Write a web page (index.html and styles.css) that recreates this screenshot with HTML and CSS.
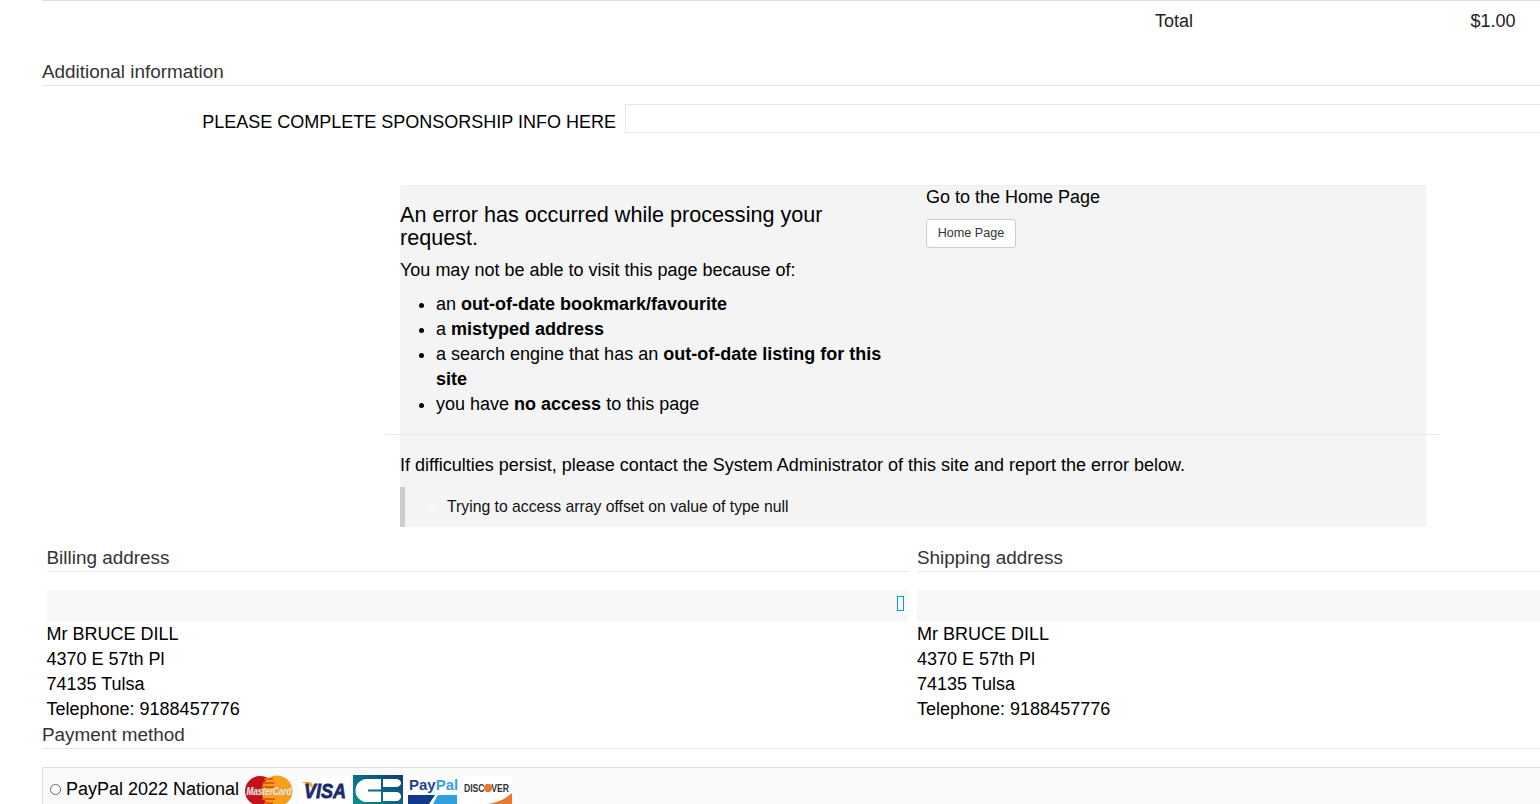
FILE: index.html
```html
<!DOCTYPE html>
<html lang="en">
<head>
<meta charset="utf-8">
<title>Checkout</title>
<link rel="stylesheet" href="styles.css">
</head>
<body>
<div class="page">
  <div class="total-row"><span class="total-label">Total</span><span class="total-value">$1.00</span></div>
  <h3 class="section additional">Additional information</h3>
  <div class="field-row">
    <label class="field-label">PLEASE COMPLETE SPONSORSHIP INFO HERE</label>
    <div class="field-input"></div>
  </div>
  <div class="error-wrap">
    <div class="error-box">
      <div class="error-cols">
        <div class="error-left">
          <h2 class="error-title">An error has occurred while processing your request.</h2>
          <p class="error-intro">You may not be able to visit this page because of:</p>
          <ul class="error-list">
            <li>an <b>out-of-date bookmark/favourite</b></li>
            <li>a <b>mistyped address</b></li>
            <li>a search engine that has an <b>out-of-date listing for this site</b></li>
            <li>you have <b>no access</b> to this page</li>
          </ul>
        </div>
        <div class="error-right">
          <div class="home-title">Go to the Home Page</div>
          <a class="home-btn">Home Page</a>
        </div>
      </div>
      <hr class="error-rule">
      <p class="error-contact">If difficulties persist, please contact the System Administrator of this site and report the error below.</p>
      <div class="error-quote"><span class="quote-mark">0</span><span>Trying to access array offset on value of type null</span></div>
    </div>
  </div>
  <div class="addresses">
    <div class="address billing">
      <h3 class="section addr-head">Billing address</h3>
      <div class="addr-bar"><span class="missing-glyph"></span></div>
      <div class="addr-text">Mr BRUCE DILL<br>4370 E 57th Pl<br>74135 Tulsa<br>Telephone: 9188457776</div>
    </div>
    <div class="address shipping">
      <h3 class="section addr-head">Shipping address</h3>
      <div class="addr-bar"></div>
      <div class="addr-text">Mr BRUCE DILL<br>4370 E 57th Pl<br>74135 Tulsa<br>Telephone: 9188457776</div>
    </div>
  </div>
  <h3 class="section payment">Payment method</h3>
  <div class="pay-box">
    <span class="radio"></span>
    <span class="pay-name">PayPal 2022 National</span>
    <div class="logos">
      <svg class="logo" width="50" height="36" viewBox="0 0 50 36"><rect width="50" height="36" fill="#fff"/><circle cx="16" cy="16" r="15" fill="#c4121a"/><circle cx="33" cy="16" r="15.500" fill="#f9a01b"/><g fill="#e8590c"><rect x="20" y="3" width="9" height="2"/><rect x="18.500" y="7" width="12" height="2"/><rect x="18" y="11" width="13" height="2"/><rect x="18" y="23" width="13" height="2"/><rect x="20" y="27" width="9" height="2"/></g><text x="25" y="20" textLength="45" lengthAdjust="spacingAndGlyphs" class="mc-text">MasterCard</text></svg>
      <svg class="logo" width="50" height="36" viewBox="0 0 50 36"><rect width="50" height="36" fill="#fff"/><path d="M2 7h8c2 0 3 1 3.500 3l1 5C12 11 7 8 2 7z" fill="#f4a91f"/><text x="5" y="23" textLength="42" lengthAdjust="spacingAndGlyphs" class="visa-text">VISA</text></svg>
      <svg class="logo" width="50" height="36" viewBox="0 0 50 36"><defs><linearGradient id="cbg" x1="0" y1="1" x2="1" y2="0"><stop offset="0" stop-color="#0d9a94"/><stop offset="1" stop-color="#0b3f78"/></linearGradient></defs><rect width="50" height="36" fill="url(#cbg)"/><path d="M28 4H14a11.500 11.500 0 0 0 0 23H28V16.500H15v-2H28z" fill="#fff"/><path d="M30 4h13c3 0 5 1.800 5 4s-2 4-5 4H30zM30 17h13c3 0 5 2 5 4.500S46 26 43 26H30z" fill="#fff"/></svg>
      <svg class="logo" width="50" height="36" viewBox="0 0 50 36"><rect width="50" height="36" fill="#fff"/><text x="1" y="15" class="pp-text"><tspan fill="#1f3f8f">Pay</tspan><tspan fill="#3a9ee0">Pal</tspan></text><path d="M0 20h27l-6 9H0z" fill="#123a8c"/><path d="M30 20h19v9H25z" fill="#2f9fe0"/></svg>
      <svg class="logo" width="50" height="36" viewBox="0 0 50 36"><rect width="50" height="36" fill="#fff"/><text x="2" y="17" textLength="45" lengthAdjust="spacingAndGlyphs" class="disc-text">DISCOVER</text><circle cx="26" cy="13" r="4" fill="#e8792c"/><path d="M50 18v11H24c11-1 19-5 26-11z" fill="#e8792c"/></svg>
    </div>
  </div>
</div>
</body>
</html>
```
FILE: styles.css
```css
html, body {
  margin: 0;
  padding: 0;
  background: #fff;
  overflow: hidden;
  height: 804px;
}
body {
  font-family: "Liberation Sans", Arial, sans-serif;
  font-size: 18px;
  color: #000;
  line-height: 25px;
}
.page {
  padding-left: 42px;
  width: 1540px;
  height: 804px;
  box-sizing: border-box;
  overflow: hidden;
}
.total-row {
  border-top: 1px solid #dedede;
  display: flex;
  height: 51px;
  padding-top: 8px;
  box-sizing: border-box;
  color: #222;
}
.total-label {
  margin-left: 1113px;
  width: 315.500px;
}
.total-value {
  white-space: nowrap;
}
.section {
  margin: 0;
  font-weight: 400;
  font-size: 18.900px;
  line-height: 25px;
  color: #333;
}
.additional {
  height: 35px;
  padding-top: 8px;
  box-sizing: border-box;
  border-bottom: 1px solid #e5e5e5;
}
.field-row {
  display: flex;
  margin-top: 18px;
  height: 29px;
}
.field-label {
  flex: none;
  width: 574px;
  text-align: right;
  line-height: 36px;
  white-space: nowrap;
}
.field-input {
  flex: none;
  margin-left: 9px;
  width: 1000px;
  height: 29px;
  box-sizing: border-box;
  border: 1px solid #e6e6e6;
}
.error-wrap {
  margin-top: 52px;
  margin-left: 358px;
  width: 1026px;
}
.error-box {
  background: #f4f4f4;
  height: 342px;
  border-top: 1px solid #eee;
  box-sizing: border-box;
  border-radius: 3px;
}
.error-cols {
  display: flex;
  height: 248px;
}
.error-left {
  width: 526px;
  flex: none;
}
.error-title {
  margin: 17px 0 0;
  font-size: 21.600px;
  line-height: 23px;
  font-weight: 400;
  width: 500px;
}
.error-intro {
  margin: 9px 0 0;
}
.error-list {
  margin: 9px 0 0;
  padding-left: 36px;
  width: 470px;
}
.error-right {
  flex: 1;
}
.home-title {
  line-height: 22px;
}
.home-btn {
  display: inline-block;
  margin-top: 11px;
  width: 90px;
  height: 29px;
  box-sizing: border-box;
  text-align: center;
  background: #fff;
  border: 1px solid #ccc;
  border-radius: 3px;
  font-size: 12.600px;
  line-height: 26px;
  color: #333;
}
.error-rule {
  margin: 0 -14px;
  border: 0;
  border-top: 1px solid #eaeaea;
  height: 0;
}
.error-contact {
  margin: 18px 0 0;
  line-height: 25px;
}
.error-quote {
  margin-top: 9px;
  height: 40px;
  border-left: 5px solid #ccc;
  box-sizing: border-box;
  padding-top: 7px;
  padding-left: 23px;
  font-size: 15.750px;
  color: #111;
  display: flex;
}
.quote-mark {
  color: #fff;
  font-size: 12px;
  width: 19px;
}
.addresses {
  display: flex;
  margin-left: 4.500px;
  margin-top: 18px;
  gap: 9px;
}
.address {
  flex: none;
  width: 861.500px;
}
.shipping {
  width: 700px;
}
.addr-head {
  height: 26px;
  border-bottom: 1px solid #e5e5e5;
}
.addr-bar {
  margin-top: 18px;
  height: 32px;
  background: #f8f8f8;
  display: flex;
  justify-content: flex-end;
  align-items: flex-start;
  padding-right: 4px;
  box-sizing: border-box;
}
.missing-glyph {
  display: block;
  width: 7px;
  height: 15px;
  box-sizing: border-box;
  border: 1px solid #0a9ad6;
  margin-top: 6px;
}
.payment {
  height: 26px;
  border-bottom: 1px solid #e5e5e5;
}
.pay-box {
  margin-top: 18px;
  height: 60px;
  border: 1px solid #e0e0e0;
  background: #fafafa;
  box-sizing: border-box;
  display: flex;
  align-items: flex-start;
  padding-top: 9px;
  padding-left: 7px;
  width: 1600px;
}
.radio {
  width: 11px;
  height: 11px;
  border: 1px solid #666;
  border-radius: 50%;
  background: #fff;
  box-sizing: border-box;
  margin-top: 7px;
  flex: none;
}
.pay-name {
  margin-left: 5px;
  white-space: nowrap;
  line-height: 25px;
}
.logos {
  display: flex;
  margin-left: 5px;
  gap: 4.500px;
  margin-top: -2px;
}
.logo {
  display: block;
  flex: none;
}
.mc-text {
  font-family: "Liberation Sans", sans-serif;
  font-size: 11px;
  font-style: italic;
  font-weight: 700;
  fill: #fff;
  stroke: #999;
  stroke-width: 0.25px;
  text-anchor: middle;
}
.visa-text {
  font-family: "Liberation Sans", sans-serif;
  font-size: 21px;
  font-style: italic;
  font-weight: 700;
  fill: #1a2a6c;
  stroke: #1a2a6c;
  stroke-width: 0.8px;
}
.pp-text {
  font-family: "Liberation Sans", sans-serif;
  font-size: 15px;
  font-weight: 700;
}
.disc-text {
  font-family: "Liberation Sans", sans-serif;
  font-size: 11px;
  font-weight: 700;
  fill: #333;
}
```
